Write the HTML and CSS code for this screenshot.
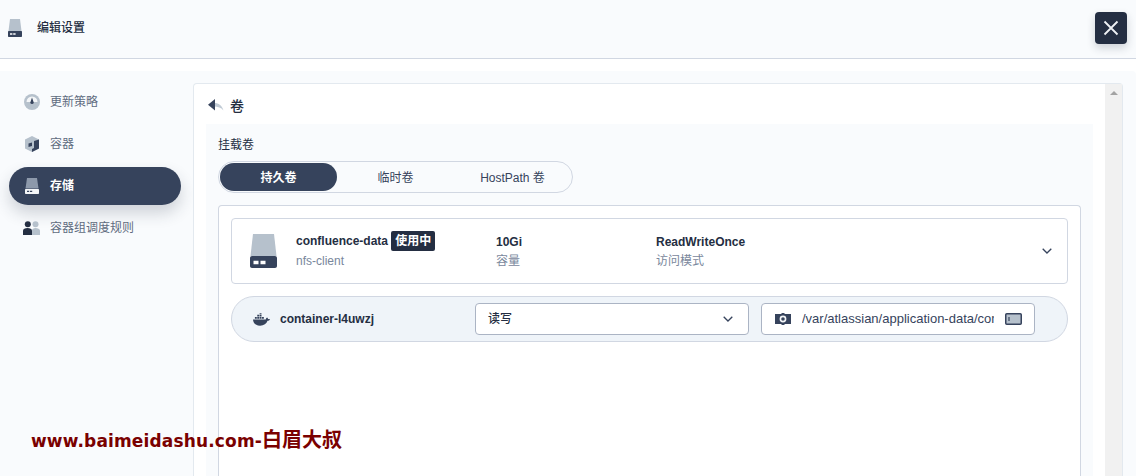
FILE: index.html
```html
<!DOCTYPE html>
<html lang="zh">
<head>
<meta charset="utf-8">
<title>编辑设置</title>
<link rel="stylesheet" href="styles.css">
</head>
<body>
<header class="head">
  <svg class="head-icon" viewBox="0 0 14 18"><path fill="#b6c1cc" d="M2 0h10l1.500 12H.5z"/><path fill="#36435c" d="M1 12h12c.6 0 1 .4 1 1v4c0 .6-.4 1-1 1H1c-.6 0-1-.4-1-1v-4c0-.6.4-1 1-1z"/><path fill="#fff" d="M2 14.200h2.400v1.600H2zM5.200 14.200h2.400v1.600H5.200z"/></svg>
  <span class="head-title">编辑设置</span>
</header>
<button class="close" aria-label="关闭"><svg viewBox="0 0 16 16"><path d="M1.500 1.500l13 13M14.500 1.500l-13 13" stroke="#eef1f5" stroke-width="1.800" fill="none"/></svg></button>
<div class="body">
  <nav class="side">
    <a class="nav-item">
      <svg class="nav-icon" viewBox="0 0 16 16"><circle cx="8" cy="8" r="8" fill="#b6c1cc"/><path fill="#f4f6f8" d="M2.500 8a5.500 5.500 0 0 1 11 0z"/><path fill="#36435c" d="M8 3.500l1.800 5.300a1.900 1.900 0 0 1-3.600 0z"/></svg>
      <span>更新策略</span>
    </a>
    <a class="nav-item">
      <svg class="nav-icon" viewBox="0 0 16 16"><path fill="#b6c1cc" d="M8 0l7 3.500v9L8 16l-7-3.500v-9z"/><path fill="#36435c" d="M10 5l5-1.500v9L8 16v-3l2-1z"/><path fill="#36435c" d="M4.500 7.500L8 6.500v3.500l-3.500 1z"/></svg>
      <span>容器</span>
    </a>
    <a class="nav-item active">
      <svg class="nav-icon" viewBox="0 0 14 16"><path fill="#8d99ab" d="M2 0h10l1.500 10.500H.5z"/><path fill="#f4f6f8" d="M1 11h12c.6 0 1 .4 1 1v3c0 .6-.4 1-1 1H1c-.6 0-1-.4-1-1v-3c0-.6.4-1 1-1z"/><path fill="#36435c" d="M2 12.800h2.200v1.200H2zM5 12.800h2.200v1.200H5z"/></svg>
      <span>存储</span>
    </a>
    <a class="nav-item">
      <svg class="nav-icon wide" viewBox="0 0 17 14"><circle cx="12.500" cy="3.300" r="3" fill="#b6c1cc"/><path fill="#b6c1cc" d="M9 14V9.500C9 8 10.500 7 12.500 7S17 8 17 9.500V14z"/><circle cx="4.800" cy="3.300" r="3" fill="#242e42"/><path fill="#242e42" d="M0 14V9.500C0 8 2 7 4.500 7S9 8 9 9.500V14z"/></svg>
      <span>容器组调度规则</span>
    </a>
  </nav>
  <main class="panel">
    <div class="panel-scroll">
      <div class="back">
        <svg class="back-icon" viewBox="0 0 16 12"><path fill="#c1cbd5" d="M6 4c5 0 8 2.500 9.500 7.500C13 8.500 10 7.500 6 7.500z"/><path fill="#36435c" d="M7 0v11.500L0 5.700z"/></svg>
        <span>卷</span>
      </div>
      <section class="form">
        <div class="form-label">挂载卷</div>
        <div class="tabs">
          <span class="tab selected">持久卷</span>
          <span class="tab">临时卷</span>
          <span class="tab">HostPath 卷</span>
        </div>
        <div class="box">
          <div class="volume">
            <svg class="vol-icon" viewBox="0 0 27 34"><path fill="#b6c1cc" d="M3 0h21l2.500 22H.5z"/><path fill="#36435c" d="M2 22h23c1.100 0 2 .9 2 2v8c0 1.100-.9 2-2 2H2c-1.100 0-2-.9-2-2v-8c0-1.100.9-2 2-2z"/><path fill="#fff" d="M3.500 26.700h5v3.600h-5zM10.500 26.700h5v3.600h-5z"/></svg>
            <div class="col col-name">
              <div class="strong">confluence-data <span class="badge">使用中</span></div>
              <div class="muted">nfs-client</div>
            </div>
            <div class="col col-cap">
              <div class="strong">10Gi</div>
              <div class="muted">容量</div>
            </div>
            <div class="col col-mode">
              <div class="strong">ReadWriteOnce</div>
              <div class="muted">访问模式</div>
            </div>
            <svg class="chev" viewBox="0 0 10 6"><path d="M.7.7L5 5l4.300-4.300" fill="none" stroke="#36435c" stroke-width="1.300"/></svg>
          </div>
          <div class="mount">
            <svg class="docker" viewBox="0 0 18 13"><path fill="#36435c" d="M0 6.500h13.500c.3-1.200 1-1.800 1.500-2 .5.500 1 1 1 1.700.6-.2 1.300-.1 2 .3-.5 1-1.500 1.400-2.600 1.400C14.400 10.800 11.500 13 7.500 13 2.500 13 .2 10 0 6.500z"/><path fill="#36435c" d="M2 3.800h2v2H2zM4.500 3.800h2v2h-2zM7 3.800h2v2H7zM9.500 3.800h2v2h-2zM4.500 1.400h2v2h-2zM7 1.400h2v2H7zM7 0h2v1H7z"/></svg>
            <span class="mount-name">container-l4uwzj</span>
            <div class="field select">
              <span class="select-value">读写</span>
              <svg class="chev" viewBox="0 0 10 6"><path d="M.7.7L5 5l4.300-4.300" fill="none" stroke="#36435c" stroke-width="1.300"/></svg>
            </div>
            <div class="field path">
              <svg class="gear" viewBox="0 0 16 12"><path fill="#36435c" d="M0 1h6.500V0h3v1H16v10H9.500v1h-3v-1H0z"/><circle cx="8" cy="6" r="2.600" fill="#36435c" stroke="#f4f6f8" stroke-width="1.600"/></svg>
              <input class="path-text" type="text" readonly value="/var/atlassian/application-data/confluence">
              <svg class="slot" viewBox="0 0 17 12"><rect x=".75" y=".75" width="15.500" height="10.500" rx="1" fill="#b6c1cc" stroke="#36435c" stroke-width="1.500"/><path d="M4 4v4" stroke="#36435c" stroke-width="1.200"/></svg>
            </div>
          </div>
        </div>
      </section>
    </div>
    <div class="scrollbar"><i class="arrow"></i></div>
  </main>
</div>
<div class="watermark">www.baimeidashu.com-<span class="watermark-cjk">白眉大叔</span></div>
</body>
</html>
```
FILE: styles.css
```css
* { box-sizing: border-box; }
html, body { height: 100%; }
body {
  margin: 0;
  width: 1136px;
  height: 476px;
  overflow: hidden;
  background: #fff;
  position: relative;
  font-family: "Liberation Sans", "Noto Sans CJK SC", sans-serif;
  font-size: 12px;
  color: #242e42;
  display: flex;
  flex-direction: column;
}
.head {
  height: 59px;
  flex: none;
  background: #f9fbfd;
  border-bottom: 1px solid #d1d7e2;
  display: flex;
  align-items: center;
  padding: 0 0 2px 8px;
}
.head-icon { width: 14px; height: 18px; flex: none; }
.head-title { margin-left: 15px; font-weight: 500; font-size: 12px; line-height: 20px; color: #242e42; }
.close {
  position: absolute;
  top: 12px;
  left: 1095px;
  width: 32px;
  height: 32px;
  padding: 8px;
  border: 0;
  border-radius: 4px;
  background: #242e42;
  box-shadow: 0 4px 8px rgba(36, 46, 66, .2);
  display: flex;
}
.close svg { width: 16px; height: 16px; }
.body {
  margin-top: 12px;
  flex: 1;
  min-height: 0;
  background: #f9fbfd;
  border-radius: 0 4px 0 0;
  display: flex;
  padding: 12px 13px 0 0;
}
.side {
  width: 193px;
  flex: none;
  padding: 0 12px 0 9px;
  display: flex;
  flex-direction: column;
  gap: 4px;
}
.nav-item {
  height: 38px;
  flex: none;
  border-radius: 19px;
  padding-left: 15px;
  display: flex;
  align-items: center;
  color: #5f6b80;
  line-height: 20px;
}
.nav-item span { margin-left: 10px; }
.nav-icon { width: 16px; height: 16px; flex: none; }
.nav-icon.wide { width: 17px; height: 14px; margin-left: -1px; }
.nav-item.active {
  background: #36435c;
  color: #fff;
  font-weight: 700;
  box-shadow: 0 8px 16px rgba(36, 46, 66, .2);
}
.panel {
  flex: 1;
  min-width: 0;
  background: #fff;
  border: 1px solid #e3e9ef;
  border-bottom: 0;
  border-radius: 4px 4px 0 0;
  display: flex;
}
.panel-scroll {
  flex: 1;
  min-width: 0;
  padding: 0 12px;
  display: flex;
  flex-direction: column;
}
.back {
  height: 40px;
  flex: none;
  display: flex;
  align-items: center;
  padding: 4px 0 0 2px;
  font-size: 14px;
  font-weight: 500;
  line-height: 20px;
  color: #242e42;
}
.back-icon { width: 16px; height: 12px; margin-right: 6px; margin-top: -2px; }
.form {
  flex: 1;
  min-height: 0;
  background: #f9fbfd;
  padding: 12px 12px 0;
  display: flex;
  flex-direction: column;
}
.form-label { line-height: 18px; color: #242e42; }
.tabs {
  margin-top: 7px;
  width: 355px;
  height: 32px;
  flex: none;
  border: 1px solid #d1d7e2;
  border-radius: 16px;
  padding: 1px;
  display: flex;
  background: #f9fbfd;
}
.tab {
  width: 117px;
  border-radius: 14px;
  padding-bottom: 2px;
  display: flex;
  align-items: center;
  justify-content: center;
  color: #36435c;
}
.tab.selected { background: #36435c; color: #fff; font-weight: 700; }
.box {
  margin-top: 12px;
  flex: 1;
  min-height: 0;
  background: #fff;
  border: 1px solid #d1d7e2;
  border-bottom: 0;
  border-radius: 4px 4px 0 0;
  padding: 12px;
}
.volume {
  height: 66px;
  border: 1px solid #d1d7e2;
  border-radius: 4px;
  display: flex;
  align-items: center;
  padding: 0 15px 0 18px;
}
.vol-icon { width: 27px; height: 34px; flex: none; margin-right: 19px; }
.col { display: flex; flex-direction: column; gap: 1px; }
.col-name { width: 200px; }
.col-cap { width: 160px; }
.col-mode { flex: 1; }
.strong { font-weight: 700; line-height: 18px; color: #242e42; white-space: nowrap; }
.muted { line-height: 18px; color: #79879c; }
.badge {
  display: inline-block;
  background: #242e42;
  color: #fff;
  font-weight: 700;
  line-height: 20px;
  padding: 0 4px;
  border-radius: 2px;
  vertical-align: top;
  margin-top: -1px;
}
.chev { width: 10px; height: 6px; flex: none; }
.mount {
  margin-top: 12px;
  height: 46px;
  background: #eff4f9;
  border: 1px solid #d1d7e2;
  border-radius: 23px;
  display: flex;
  align-items: center;
  padding: 0 32px 0 21px;
}
.docker { width: 17px; height: 13px; flex: none; }
.mount-name { margin-left: 10px; width: 195px; font-weight: 700; color: #242e42; flex: none; }
.field {
  height: 32px;
  background: #fff;
  border: 1px solid #abb4c4;
  border-radius: 4px;
  display: flex;
  align-items: center;
  flex: none;
}
.select { width: 274px; padding: 0 15px 0 12px; justify-content: space-between; color: #242e42; font-weight: 500; }
.select-value { margin-top: -3px; }
.path { width: 274px; margin-left: 12px; padding: 0 13px; color: #36435c; }
.gear { width: 16px; height: 12px; flex: none; }
.path-text {
  margin-left: 11px;
  width: 192px;
  flex: none;
  padding: 0;
  border: 0;
  outline: 0;
  background: transparent;
  font: 13px/18px "Liberation Sans", sans-serif;
  color: #36435c;
}
.slot { width: 17px; height: 12px; flex: none; margin-left: 11px; }
.scrollbar { width: 17px; background: #f1f1f1; flex: none; padding-top: 7px; display: flex; justify-content: center; align-items: flex-start; }
.arrow { width: 0; height: 0; border: 4px solid transparent; border-top: 0; border-bottom: 4px solid #a3a3a3; }
.watermark {
  position: absolute;
  left: 31px;
  top: 430px;
  color: #7a0000;
  font-family: "DejaVu Sans", "Noto Sans CJK SC", sans-serif;
  font-weight: 700;
  font-size: 17px;
  letter-spacing: .15px;
  line-height: 20px;
  white-space: nowrap;
}
.watermark-cjk { font-size: 20px; letter-spacing: 0; }
```
